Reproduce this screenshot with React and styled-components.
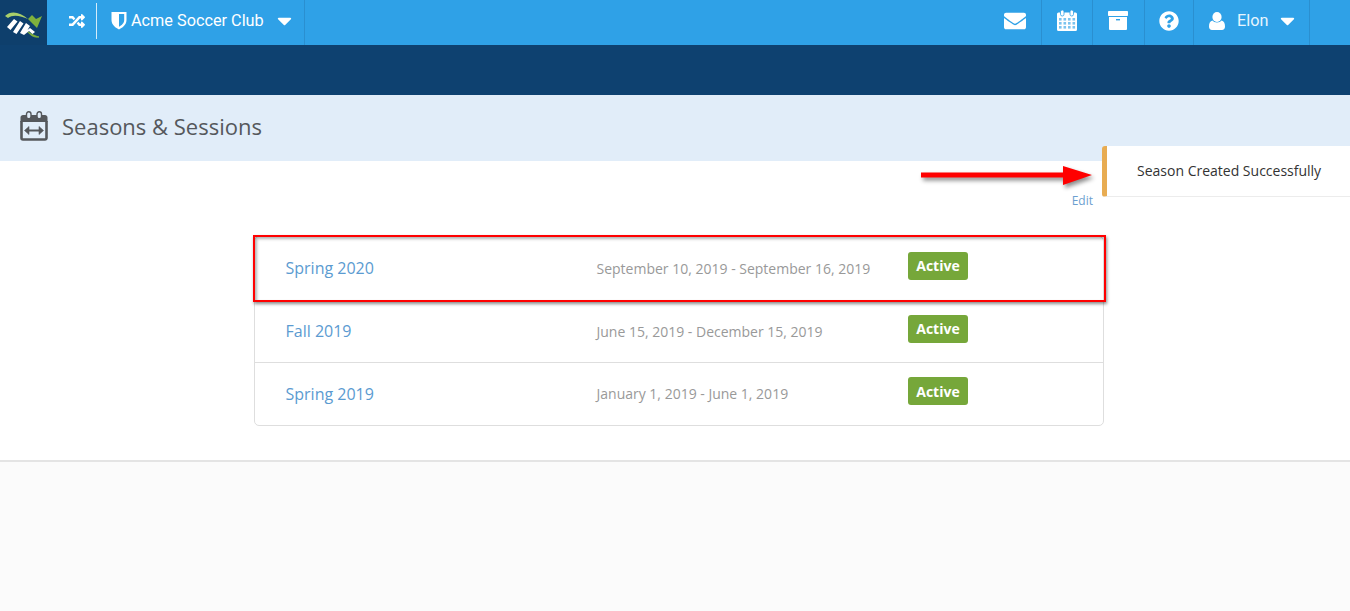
import React from "react";
import styled, { createGlobalStyle } from "styled-components";
import { FaRandom, FaCaretDown, FaEnvelope, FaQuestionCircle } from "react-icons/fa";

const GlobalStyle = createGlobalStyle`
  html, body {
    margin: 0;
    padding: 0;
    background: #fbfbfb;
    font-family: "Open Sans", sans-serif;
  }
`;

const Page = styled.div`
  position: relative;
  width: 1350px;
  height: 611px;
  overflow: hidden;
`;

const TopBar = styled.header`
  display: flex;
  justify-content: space-between;
  height: 45px;
  background: #2fa1e7;
  color: #fff;
  font-family: Roboto, sans-serif;
`;

const BarGroup = styled.div`
  display: flex;
  align-items: stretch;
`;

const LogoBox = styled.div`
  display: flex;
  align-items: center;
  justify-content: center;
  width: 47px;
  background: #0e3f6c;
`;

const ShuffleCell = styled.div`
  display: flex;
  align-items: center;
  justify-content: center;
  width: 50px;
  box-sizing: border-box;
  padding: 0 0 4px 9px;
  font-size: 16px;
  position: relative;
  &::after {
    content: "";
    position: absolute;
    right: 0;
    top: 3px;
    bottom: 6px;
    width: 1px;
    background: #d5ecfa;
  }
`;

const ClubCell = styled.div`
  display: flex;
  align-items: center;
  width: 208px;
  padding: 0 0 4px 14px;
  box-sizing: border-box;
  border-right: 1px solid #2a8fd0;
  font-size: 16.25px;
  gap: 4px;
`;

const Caret = styled(FaCaretDown)`
  font-size: 23px;
  margin-left: ${(p) => p.$gap}px;
`;

const IconCell = styled.div`
  display: flex;
  align-items: center;
  justify-content: center;
  width: ${(p) => p.$width}px;
  padding: 0 ${(p) => p.$nudge || 0}px 4px 0;
  box-sizing: border-box;
  border-right: 1px solid #2a8fd0;
  font-size: ${(p) => p.$size}px;
`;

const UserCell = styled.div`
  display: flex;
  align-items: center;
  width: 116px;
  padding: 0 0 4px 15px;
  box-sizing: border-box;
  border-right: 1px solid #2a8fd0;
  font-size: 16.25px;
  margin-right: 40px;
`;

const UserName = styled.span`
  margin-left: 12px;
  color: #e6f5fe;
`;

const Band = styled.div`
  height: 50px;
  background: #0e4170;
`;

const TitleBar = styled.div`
  display: flex;
  align-items: center;
  height: 66px;
  padding: 0 0 4px 20px;
  box-sizing: border-box;
  gap: 14px;
  background: #e1edf9;
`;

const Title = styled.h1`
  margin: 0;
  font-size: 22px;
  font-weight: 400;
  color: #55585c;
`;

const Content = styled.main`
  height: 301px;
  box-sizing: border-box;
  background: #fff;
  border-bottom: 2px solid #e4e4e4;
`;

const EditRow = styled.div`
  display: flex;
  justify-content: flex-end;
  width: 1093px;
  height: 75px;
  padding-top: 32px;
  box-sizing: border-box;
`;

const EditLink = styled.a`
  font-size: 12px;
  line-height: 16px;
  color: #6d9fd0;
`;

const SeasonList = styled.div`
  width: 850px;
  margin-left: 254px;
  box-sizing: border-box;
  border: 1px solid #dedede;
  border-radius: 5px;
`;

const SeasonRow = styled.div`
  display: grid;
  grid-template-columns: 311px 311.5px 1fr;
  align-items: center;
  height: 62.5px;
  box-sizing: border-box;
  padding-left: 30.5px;
  border-top: ${(p) => (p.$first ? "none" : "1px solid #dedede")};
`;

const SeasonName = styled.a`
  font-size: 16px;
  color: #5b9bd1;
`;

const SeasonDates = styled.span`
  font-size: 14px;
  color: #999;
`;

const Badge = styled.span`
  display: inline-flex;
  align-items: center;
  justify-content: center;
  justify-self: start;
  width: 60px;
  height: 28px;
  margin-top: -5px;
  border-radius: 3px;
  background: #76a73a;
  color: #fff;
  font-size: 14px;
  font-weight: 700;
`;

const Toast = styled.div`
  position: absolute;
  left: 1102px;
  top: 146px;
  display: flex;
  align-items: center;
  width: 248px;
  height: 51px;
  box-sizing: border-box;
  padding: 0 0 2px 30px;
  background: #fff;
  border-left: 5px solid #e8ac52;
  border-bottom: 1px solid #ececec;
  border-radius: 3px 0 0 3px;
  font-size: 14px;
  color: #333;
`;

const Highlight = styled.div`
  position: absolute;
  left: 253px;
  top: 235px;
  width: 853px;
  height: 67px;
  box-sizing: border-box;
  border: 2px solid #f00;
  box-shadow: 1px 2px 3px rgba(0, 0, 0, 0.45), inset 2px 2px 3px rgba(0, 0, 0, 0.3);
`;

const Arrow = styled.svg`
  position: absolute;
  left: 918px;
  top: 162px;
  filter: drop-shadow(2px 3px 2px rgba(0, 0, 0, 0.45));
`;

const LogoMark = () => (
  <svg width="42" height="34" viewBox="0 0 42 34">
    <path d="M2 10 C8 4 17 6 25 13 C18 10 10 8 5 12 L2 10Z" fill="#a9cf6a" />
    <path d="M25 13 L29 9 L33 13 L39 10 L34 22 L30 18Z" fill="#7fb13c" />
    <path d="M24 25 C28 28 32 30 36 31 C31 32 27 29 24 25Z" fill="#7fb13c" stroke="#7fb13c" strokeWidth="0.8" />
    <path
      d="M4 21 L11 13 L14.5 15.5 L7.5 24Z M10 26 L17 15 L20.5 17.5 L13.5 28Z M17 27 L23 17 L27 20 L24.5 24 L27 22 L32 26 L29.5 28 L26 25 L21 29Z"
      fill="#fff"
    />
  </svg>
);

const ShieldIcon = () => (
  <svg width="16" height="19" viewBox="0 0 16 19">
    <path
      d="M0.5 1 H15.5 V9 C15.5 14 11 17 8 18.5 C5 17 0.5 14 0.5 9Z M8 3 V15.8 C10.5 14.4 13.2 12.2 13.2 9 V3Z"
      fill="#fff"
      fillRule="evenodd"
    />
  </svg>
);

const CalendarIcon = () => (
  <svg width="20" height="21" viewBox="0 0 20 21">
    <path d="M0 4 a1.5 1.5 0 0 1 1.5-1.5 H18.5 a1.5 1.5 0 0 1 1.5 1.5 V19.5 a1.5 1.5 0 0 1-1.5 1.5 H1.5 a1.5 1.5 0 0 1-1.5-1.5Z" fill="#fff" />
    <rect x="3.5" y="0" width="3.5" height="6" rx="1.7" fill="#fff" stroke="#2fa1e7" strokeWidth="0.8" />
    <rect x="13" y="0" width="3.5" height="6" rx="1.7" fill="#fff" stroke="#2fa1e7" strokeWidth="0.8" />
    {[8, 12, 16].map((y) =>
      [2, 6.5, 11, 15.5].map((x) => (
        <rect key={`${x}-${y}`} x={x} y={y} width="2.6" height="2.6" fill="#7cc4ef" />
      ))
    )}
  </svg>
);

const ArchiveIcon = () => (
  <svg width="20" height="19" viewBox="0 0 20 19">
    <rect x="0" y="0" width="20" height="5" rx="0.8" fill="#fff" />
    <path d="M1 6 H19 V18 a1 1 0 0 1-1 1 H2 a1 1 0 0 1-1-1Z" fill="#fff" />
    <rect x="8" y="8" width="4" height="1.4" fill="#2fa1e7" />
  </svg>
);

const UserIcon = () => (
  <svg width="16" height="18" viewBox="0 0 16 18">
    <ellipse cx="8" cy="5" rx="4.6" ry="5" fill="#fff" />
    <path d="M3.5 8.5 C5 11 11 11 12.5 8.5 C15 9 16 11.5 16 14.5 C16 16.8 14.8 18 13 18 H3 C1.2 18 0 16.8 0 14.5 C0 11.5 1 9 3.5 8.5Z" fill="#fff" />
  </svg>
);

const SeasonsIcon = () => (
  <svg width="28" height="30" viewBox="0 0 28 30" fill="none" stroke="#55585c">
    <path d="M1.5 10 V6.5 a1.5 1.5 0 0 1 1.5-1.5 H25 a1.5 1.5 0 0 1 1.5 1.5 V10Z" fill="#55585c" strokeWidth="2" />
    <path d="M1.5 10 V27 a1.5 1.5 0 0 0 1.5 1.5 H25 a1.5 1.5 0 0 0 1.5-1.5 V10" strokeWidth="2.6" />
    <rect x="6.5" y="0.8" width="4.5" height="7" rx="2.2" fill="#e1edf9" strokeWidth="1.4" />
    <rect x="17" y="0.8" width="4.5" height="7" rx="2.2" fill="#e1edf9" strokeWidth="1.4" />
    <path d="M7 19.5 H21" strokeWidth="2" />
    <path d="M9 15.5 L4.5 19.5 L9 23.5Z M19 15.5 L23.5 19.5 L19 23.5Z" fill="#55585c" strokeWidth="0.6" />
  </svg>
);

const seasons = [
  { name: "Spring 2020", dates: "September 10, 2019 - September 16, 2019" },
  { name: "Fall 2019", dates: "June 15, 2019 - December 15, 2019" },
  { name: "Spring 2019", dates: "January 1, 2019 - June 1, 2019" },
];

export default function App() {
  return (
    <Page>
      <GlobalStyle />
      <TopBar>
        <BarGroup>
          <LogoBox>
            <LogoMark />
          </LogoBox>
          <ShuffleCell>
            <FaRandom />
          </ShuffleCell>
          <ClubCell>
            <ShieldIcon />
            <span>Acme Soccer Club</span>
            <Caret $gap={5} />
          </ClubCell>
        </BarGroup>
        <BarGroup>
          <IconCell $width={52} $size={22} $nudge={2}>
            <FaEnvelope />
          </IconCell>
          <IconCell $width={51} $size={21}>
            <CalendarIcon />
          </IconCell>
          <IconCell $width={52} $size={20} $nudge={2}>
            <ArchiveIcon />
          </IconCell>
          <IconCell $width={49} $size={20}>
            <FaQuestionCircle />
          </IconCell>
          <UserCell>
            <UserIcon />
            <UserName>Elon</UserName>
            <Caret $gap={8} />
          </UserCell>
        </BarGroup>
      </TopBar>
      <Band />
      <TitleBar>
        <SeasonsIcon />
        <Title>Seasons &amp; Sessions</Title>
      </TitleBar>
      <Content>
        <EditRow>
          <EditLink>Edit</EditLink>
        </EditRow>
        <SeasonList>
          {seasons.map((s, i) => (
            <SeasonRow key={s.name} $first={i === 0}>
              <SeasonName>{s.name}</SeasonName>
              <SeasonDates>{s.dates}</SeasonDates>
              <Badge>Active</Badge>
            </SeasonRow>
          ))}
        </SeasonList>
      </Content>
      <Highlight />
      <Arrow width="180" height="32" viewBox="0 0 180 32">
        <path d="M3 10.5 H145 V4 L174 13 L145 23 V15.5 H3Z" fill="#f00" />
      </Arrow>
      <Toast>Season Created Successfully</Toast>
    </Page>
  );
}
